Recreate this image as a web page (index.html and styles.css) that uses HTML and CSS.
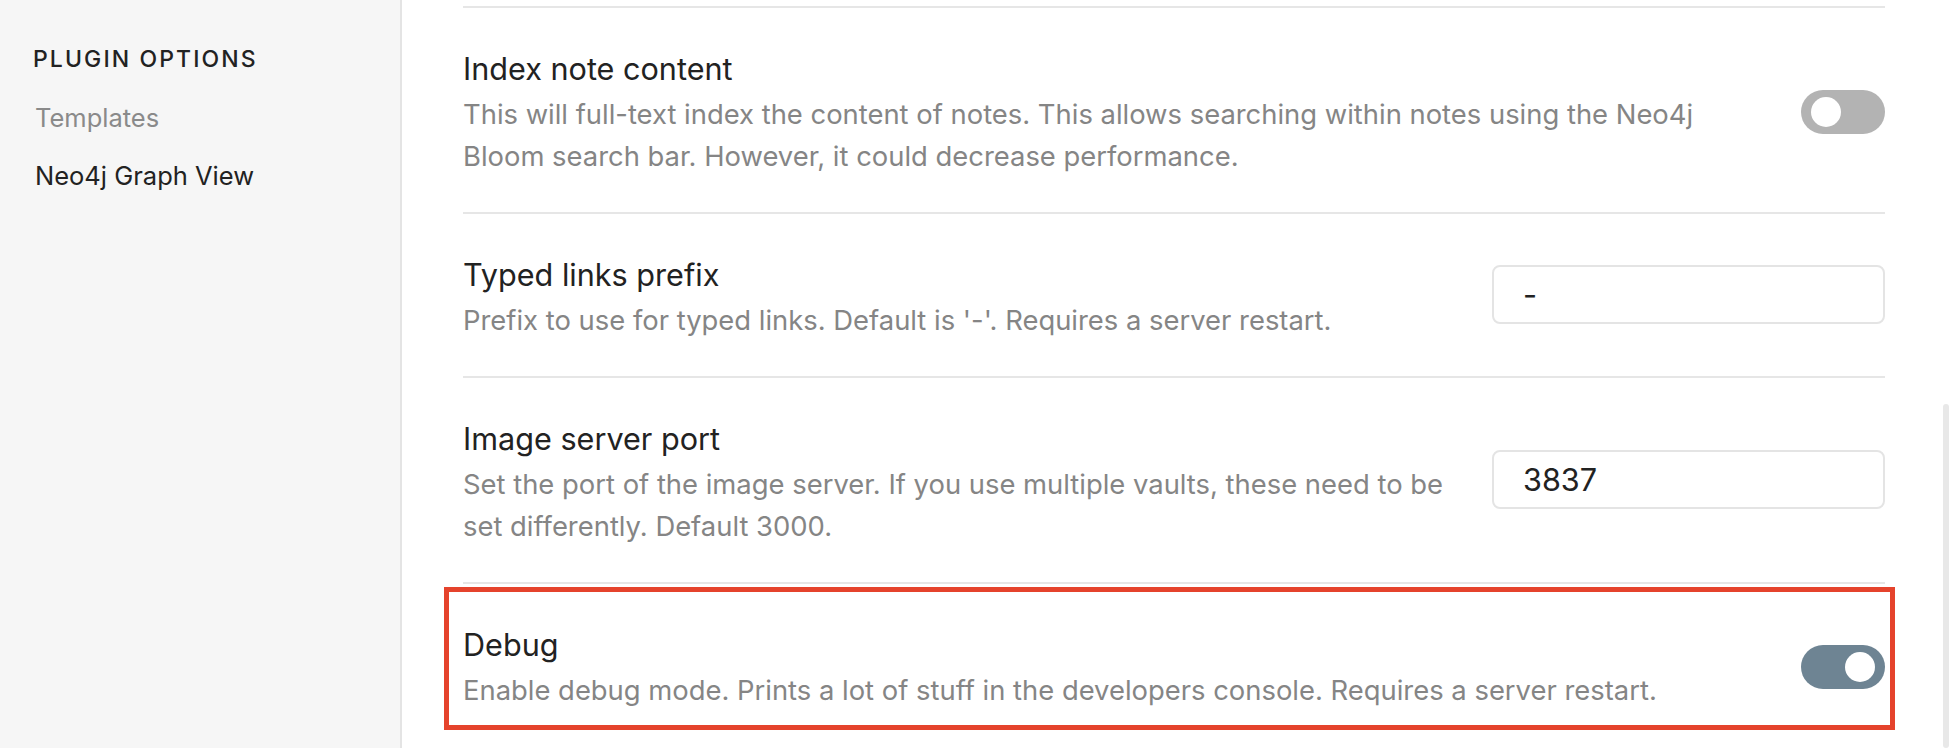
FILE: index.html
```html
<!DOCTYPE html>
<html lang="en">
<head>
<meta charset="utf-8">
<title>Plugin options</title>
<link rel="stylesheet" href="styles.css">
</head>
<body>
<div class="app">
  <aside class="sidebar">
    <div class="group-title">PLUGIN OPTIONS</div>
    <div class="nav-item muted">Templates</div>
    <div class="nav-item">Neo4j Graph View</div>
  </aside>
  <main class="content">
    <div class="setting">
      <div class="info">
        <div class="name">Index note content</div>
        <div class="desc">This will full-text index the content of notes. This allows searching within notes using the Neo4j Bloom search bar. However, it could decrease performance.</div>
      </div>
      <div class="control"><div class="toggle"><span class="knob"></span></div></div>
    </div>
    <div class="setting">
      <div class="info">
        <div class="name">Typed links prefix</div>
        <div class="desc">Prefix to use for typed links. Default is '-'. Requires a server restart.</div>
      </div>
      <div class="control input-control"><div class="text-input">-</div></div>
    </div>
    <div class="setting">
      <div class="info">
        <div class="name">Image server port</div>
        <div class="desc">Set the port of the image server. If you use multiple vaults, these need to be set differently. Default 3000.</div>
      </div>
      <div class="control input-control"><div class="text-input">3837</div></div>
    </div>
    <div class="setting last">
      <div class="info">
        <div class="name">Debug</div>
        <div class="desc">Enable debug mode. Prints a lot of stuff in the developers console. Requires a server restart.</div>
      </div>
      <div class="control"><div class="toggle on"><span class="knob"></span></div></div>
      <div class="highlight"></div>
    </div>
  </main>
  <div class="scrollbar"></div>
</div>
</body>
</html>
```

FILE: styles.css
```css
* { box-sizing: border-box; }
html, body {
  margin: 0;
  padding: 0;
  width: 1956px;
  height: 748px;
  overflow: hidden;
  background: #ffffff;
  font-family: Inter, "Noto Sans", "Liberation Sans", sans-serif;
  color: #222222;
}
.app {
  position: relative;
  display: flex;
  width: 1956px;
  height: 748px;
}
.sidebar {
  width: 402px;
  flex: 0 0 402px;
  background: #f6f6f6;
  border-right: 2px solid #e4e4e4;
  padding: 44px 0 0 33px;
}
.group-title {
  font-size: 23px;
  line-height: 30px;
  font-weight: 500;
  letter-spacing: 2.1px;
  color: #222222;
  margin-bottom: 15px;
}
.nav-item {
  font-size: 25.5px;
  line-height: 58px;
  padding-left: 2px;
  color: #222222;
}
.nav-item.muted { color: #8a8a8a; }
.content {
  flex: 1 1 auto;
  padding: 6px 71px 0 61px;
}
.setting {
  position: relative;
  display: flex;
  align-items: center;
  border-top: 2px solid #e6e6e6;
  padding: 39px 0 35px;
}
.info {
  flex: 1 1 auto;
  margin-right: 30px;
}
.name {
  font-size: 30.6px;
  line-height: 44px;
  margin-bottom: 2px;
  color: #222222;
}
.desc {
  font-size: 27.4px;
  line-height: 42px;
  color: #858585;
}
.control {
  flex: 0 0 auto;
  display: flex;
  align-items: center;
}
.input-control { margin-bottom: 5px; }
.toggle {
  position: relative;
  width: 84px;
  height: 44px;
  border-radius: 22px;
  background: #b3b3b3;
}
.toggle .knob {
  position: absolute;
  top: 7px;
  left: 10px;
  width: 30px;
  height: 30px;
  border-radius: 50%;
  background: #ffffff;
}
.toggle.on { background: #6e8493; }
.toggle.on .knob { left: auto; right: 10px; }
.text-input {
  width: 393px;
  height: 59px;
  border: 2px solid #e4e4e4;
  border-radius: 8px;
  padding-left: 29px;
  font-size: 30.6px;
  line-height: 55px;
  color: #222222;
  background: #ffffff;
}
.highlight {
  position: absolute;
  top: 3px;
  left: -19px;
  right: -10px;
  bottom: 16px;
  border: 5px solid #e5432c;
  pointer-events: none;
}
.scrollbar {
  position: absolute;
  left: 1943px;
  top: 404px;
  width: 6px;
  height: 344px;
  border-radius: 3px;
  background: #e8e8e8;
}
```
